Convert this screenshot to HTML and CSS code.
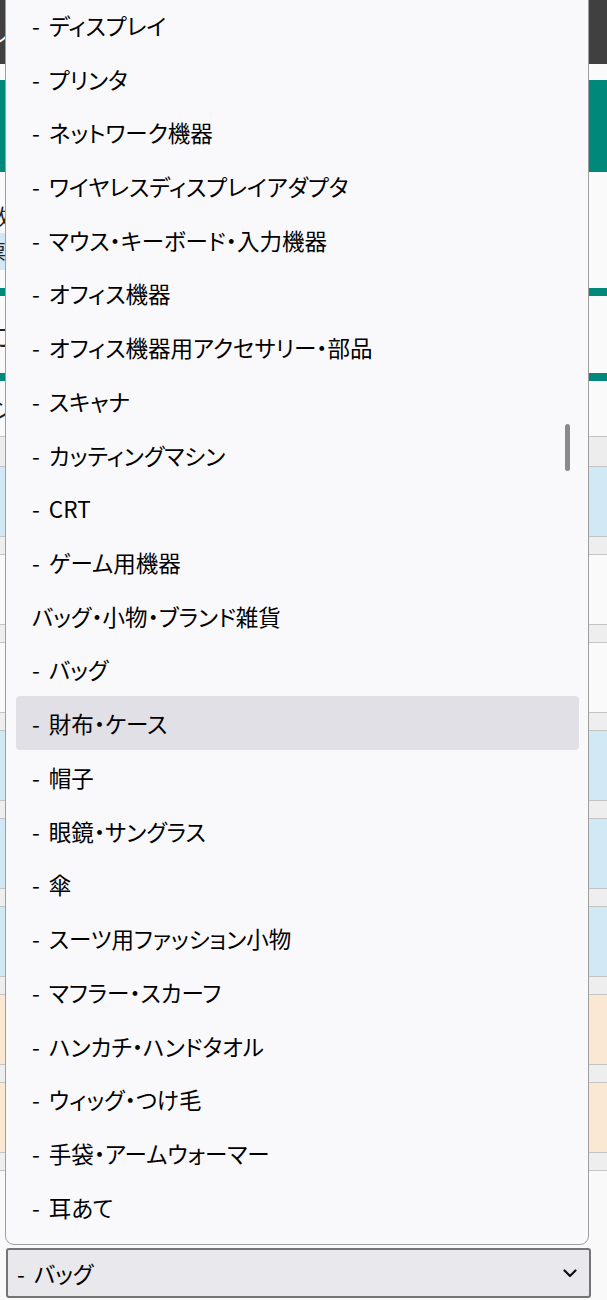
FILE: index.html
```html
<!DOCTYPE html>
<html lang="ja">
<head>
    <meta charset="UTF-8">
    <meta name="viewport" content="width=device-width, initial-scale=1.0">
    <title>カテゴリ選択</title>
    <link rel="stylesheet" href="styles.css">
</head>
<body>
    <div class="page">
        <header class="topbar">
            <span class="site-title">ルート出品管理</span>
        </header>

        <div class="notice">
            <p>カテゴリを選択してください</p>
        </div>

        <p class="lead">数量を入力し、カテゴリを選んでください</p>
        <div class="tag">票</div>

        <h2 class="section-title">ガイド</h2>
        <p class="sub">シリーズ一覧</p>

        <div class="list">
            <div class="list-head"></div>
            <div class="row blue"></div><div class="band"></div>
            <div class="row"></div><div class="band"></div>
            <div class="row"></div><div class="band"></div>
            <div class="row blue"></div><div class="band"></div>
            <div class="row blue"></div><div class="band"></div>
            <div class="row blue"></div><div class="band"></div>
            <div class="row peach"></div><div class="band"></div>
            <div class="row peach"></div><div class="band"></div>
        </div>

        <div class="form-area">
            <div class="select-box">
                <span class="select-value">- バッグ</span>
                <svg class="chevron" width="14" height="9" viewBox="0 0 14 9">
                    <path d="M1.5 1.5 L7 7 L12.5 1.5" fill="none" stroke="#111" stroke-width="2.2" stroke-linecap="round" stroke-linejoin="round"/>
                </svg>
            </div>
        </div>
    </div>

    <!-- 開いたプルダウン -->
    <div class="dropdown">
        <ul class="options">
            <li>- ディスプレイ</li>
            <li>- プリンタ</li>
            <li>- ネットワーク機器</li>
            <li>- ワイヤレスディスプレイアダプタ</li>
            <li>- マウス・キーボード・入力機器</li>
            <li>- オフィス機器</li>
            <li>- オフィス機器用アクセサリー・部品</li>
            <li>- スキャナ</li>
            <li>- カッティングマシン</li>
            <li>- CRT</li>
            <li>- ゲーム用機器</li>
            <li>バッグ・小物・ブランド雑貨</li>
            <li>- バッグ</li>
            <li class="hover">- 財布・ケース</li>
            <li>- 帽子</li>
            <li>- 眼鏡・サングラス</li>
            <li>- 傘</li>
            <li>- スーツ用ファッション小物</li>
            <li>- マフラー・スカーフ</li>
            <li>- ハンカチ・ハンドタオル</li>
            <li>- ウィッグ・つけ毛</li>
            <li>- 手袋・アームウォーマー</li>
            <li>- 耳あて</li>
        </ul>
        <div class="scroll-thumb"></div>
    </div>
</body>
</html>
```

FILE: styles.css
```css
body {
    margin: 0;
    font-family: "Noto Sans CJK JP", "Noto Sans", sans-serif;
    background-color: #fafafa;
    color: #222;
}

.page {
    width: 607px;
}

.topbar {
    height: 64px;
    background-color: #404040;
    color: white;
    display: flex;
    align-items: center;
}

.site-title {
    font-size: 22px;
    margin-left: -14px;
}

.notice {
    margin-top: 16px;
    height: 92px;
    background-color: #00897b;
    color: white;
}

.notice p {
    margin: 0;
    padding: 30px 20px;
    font-size: 20px;
}

.lead {
    margin: 0 0 0 -12px;
    padding-top: 28px;
    height: 33px;
    font-size: 22px;
    line-height: 30px;
}

.tag {
    width: 40px;
    height: 37px;
    margin-left: -14px;
    background-color: #d4e7f4;
    font-size: 20px;
    line-height: 37px;
}

.section-title {
    margin: 18px 0 0 -14px;
    height: 77px;
    border-top: 8px solid #00897b;
    border-bottom: 8px solid #00897b;
    font-size: 28px;
    font-weight: normal;
    line-height: 77px;
}

.sub {
    margin: 0 0 0 -10px;
    height: 55px;
    font-size: 24px;
    line-height: 55px;
}

.list {
    border-top: 1px solid #c4c4c4;
}

.list-head {
    height: 29px;
    background-color: #ededed;
    border-bottom: 1px solid #c4c4c4;
}

.row {
    height: 69px;
    background-color: #fafafa;
}

.row.blue {
    background-color: #d1e8f5;
}

.row.peach {
    background-color: #fbe8d2;
}

.band {
    height: 17px;
    background-color: #eeeeee;
    border-top: 1px solid #c4c4c4;
    border-bottom: 1px solid #c4c4c4;
}

.form-area {
    background-color: #f9f9f9;
    padding: 77px 16px 2px 6px;
}

.select-box {
    height: 46px;
    border: 2px solid #747474;
    border-radius: 3px;
    background-color: #e9e9ed;
    display: flex;
    align-items: center;
    justify-content: space-between;
    padding: 0 12px 0 9px;
}

.select-value {
    font-size: 22.5px;
    color: #000;
    font-feature-settings: "palt";
    word-spacing: 4px;
}

.chevron {
    display: block;
}

.dropdown {
    position: absolute;
    top: -15px;
    left: 5px;
    width: 582px;
    padding: 12px 0 10px;
    background-color: #f9f9fb;
    border: 1.5px solid #9e9e9e;
    border-radius: 0 0 9px 9px;
}

.options {
    list-style: none;
    margin: 0;
    padding: 0 9px 0 10px;
}

.options li {
    height: 53.73px;
    display: flex;
    align-items: center;
    padding-left: 16px;
    border-radius: 4px;
    font-size: 22.5px;
    color: #000;
    font-feature-settings: "palt";
    word-spacing: 4px;
    white-space: nowrap;
}

.options li.hover {
    background-color: #e0e0e6;
}

.scroll-thumb {
    position: absolute;
    top: 438px;
    left: 559px;
    width: 5px;
    height: 47px;
    border-radius: 3px;
    background-color: #8a8a8a;
}
```
